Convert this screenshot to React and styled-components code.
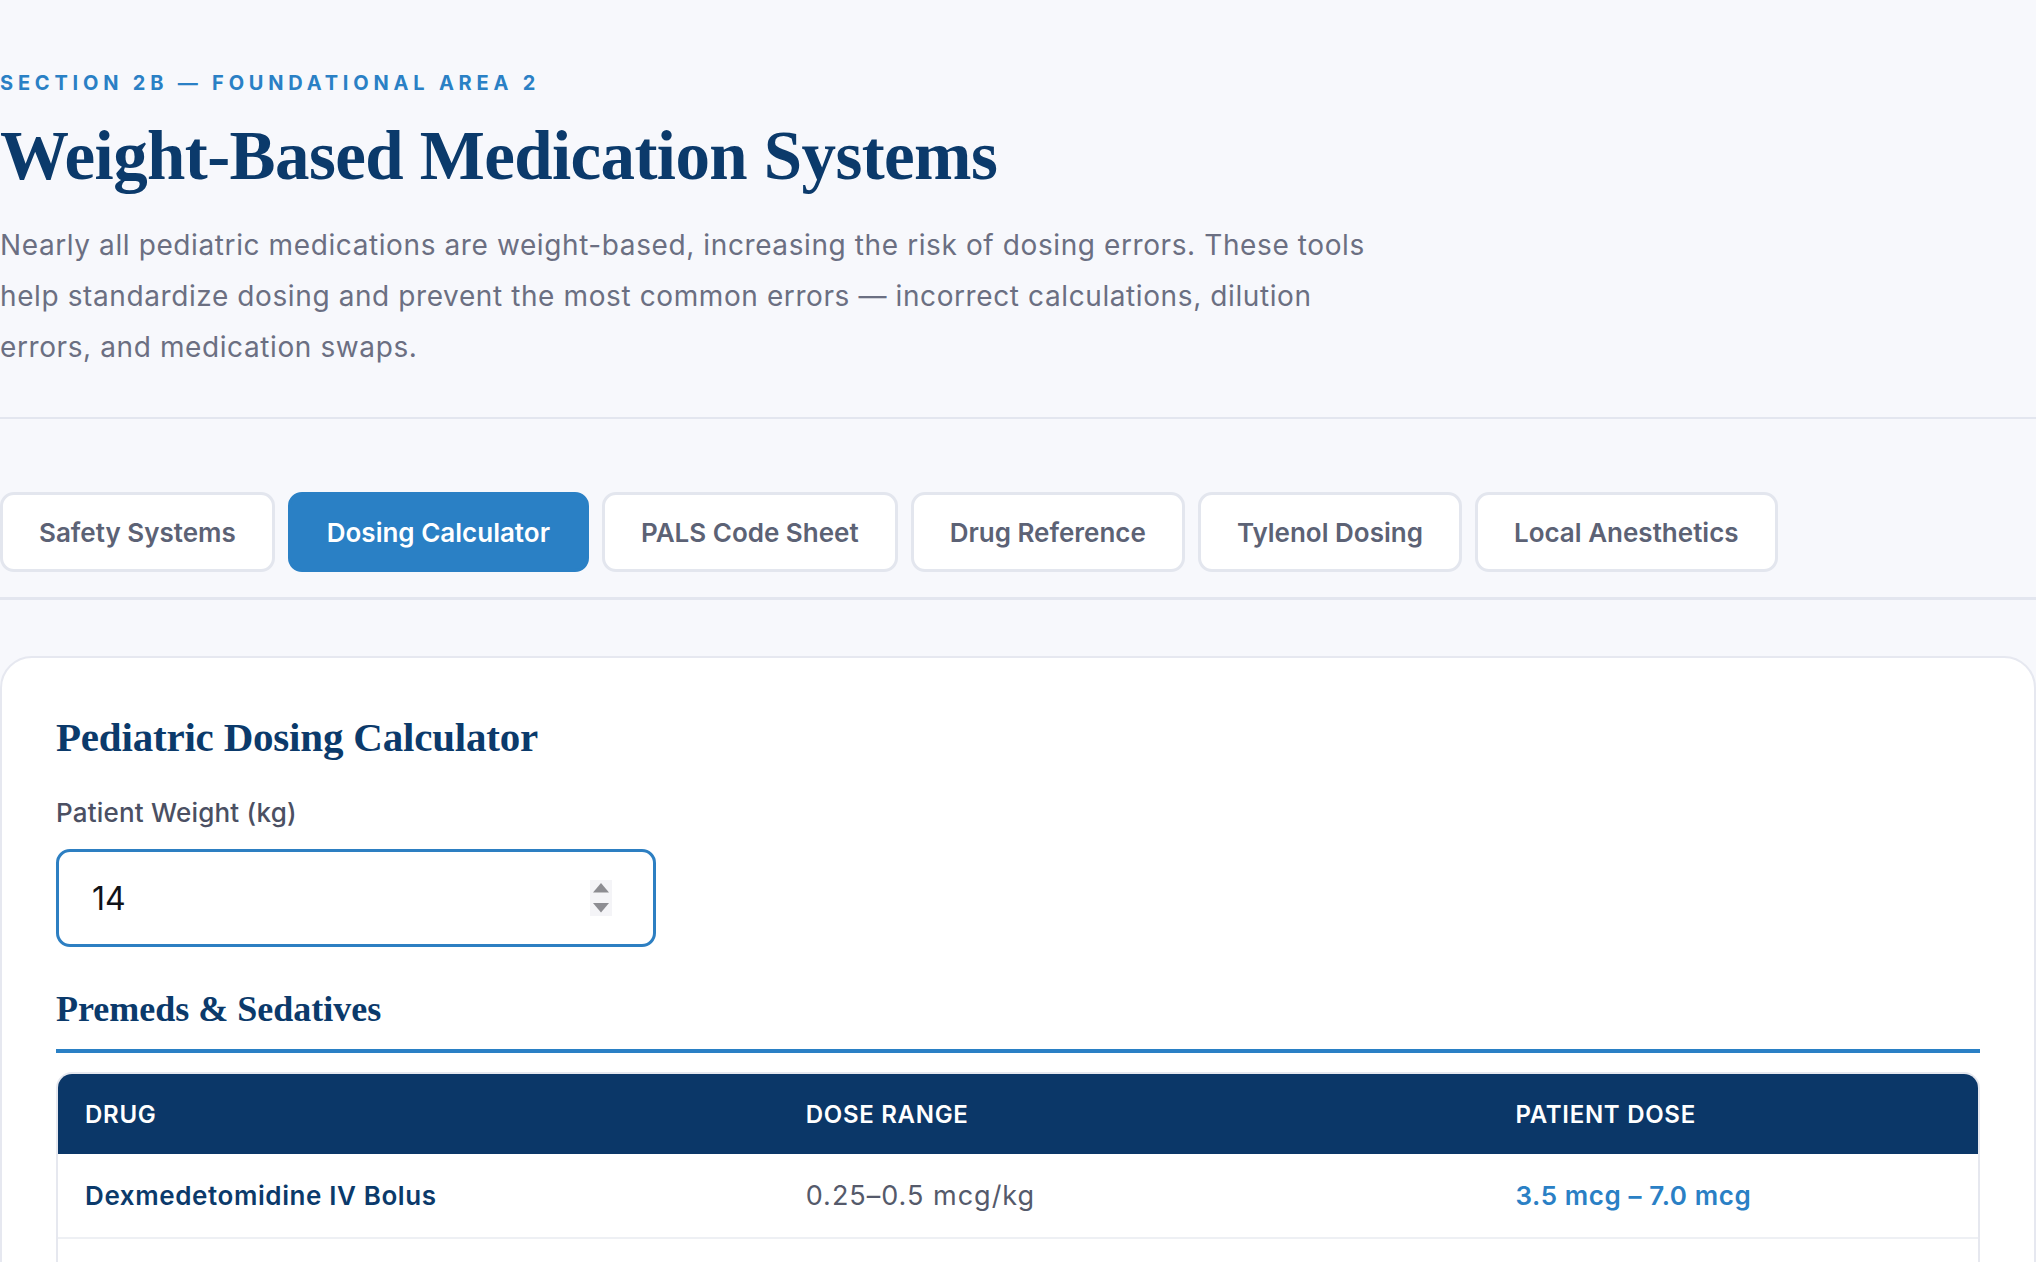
import React from "react";
import styled, { createGlobalStyle } from "styled-components";

const GlobalStyle = createGlobalStyle`
  html, body { margin: 0; padding: 0; }
  body {
    background: #f7f8fc;
    font-family: Inter, "Noto Sans", sans-serif;
    -webkit-font-smoothing: antialiased;
  }
  * { box-sizing: border-box; }
`;

const Page = styled.div`
  width: 2036px;
  min-height: 1262px;
  overflow: hidden;
`;

const Hero = styled.header`
  padding: 71px 0 44px;
  border-bottom: 2px solid #e3e6ef;
`;

const Eyebrow = styled.div`
  font-size: 20px;
  line-height: 24px;
  font-weight: 700;
  letter-spacing: 4.8px;
  color: #2a80c5;
  text-transform: uppercase;
`;

const Title = styled.h1`
  margin: 23px 0 0;
  font-family: "Liberation Serif", "DejaVu Serif", serif;
  font-weight: 700;
  font-size: 69px;
  line-height: 77px;
  letter-spacing: -0.6px;
  color: #0b3a6b;
`;

const Lead = styled.p`
  margin: 25px 0 0;
  max-width: 1400px;
  font-size: 28px;
  line-height: 51px;
  font-weight: 400;
  letter-spacing: 0.6px;
  color: #6b6f82;
`;

const TabBar = styled.nav`
  display: flex;
  gap: 13px;
  padding: 73px 0 25px;
  border-bottom: 3px solid #e3e6ef;
`;

const Tab = styled.button`
  height: 80px;
  padding: 0 36px;
  border-radius: 14px;
  border: 3px solid ${(p) => (p.$active ? "#2a80c5" : "#e3e6ee")};
  background: ${(p) => (p.$active ? "#2a80c5" : "#ffffff")};
  color: ${(p) => (p.$active ? "#ffffff" : "#5c6275")};
  font-family: Inter, "Noto Sans", sans-serif;
  font-size: 26px;
  font-weight: 600;
  cursor: pointer;
  white-space: nowrap;
`;

const Main = styled.main`
  padding-top: 56px;
`;

const Card = styled.section`
  background: #ffffff;
  border: 2px solid #e6e8f0;
  border-radius: 32px;
  padding: 55px 54px 60px;
`;

const CardTitle = styled.h2`
  margin: 0;
  font-family: "Liberation Serif", "DejaVu Serif", serif;
  font-weight: 700;
  font-size: 41px;
  line-height: 49px;
  letter-spacing: -0.2px;
  color: #0b3a6b;
`;

const Label = styled.label`
  display: block;
  margin-top: 36px;
  font-size: 26px;
  line-height: 30px;
  font-weight: 500;
  letter-spacing: 0.2px;
  color: #4b5063;
`;

const InputBox = styled.div`
  margin-top: 21px;
  width: 600px;
  height: 98px;
  display: flex;
  align-items: center;
  padding: 0 41px 0 33px;
  border: 3px solid #2d7fc2;
  border-radius: 14px;
  background: #ffffff;
`;

const NumberInput = styled.input`
  flex: 1;
  min-width: 0;
  border: none;
  outline: none;
  background: transparent;
  padding: 0;
  font-family: Inter, "Noto Sans", sans-serif;
  font-size: 32px;
  font-weight: 400;
  color: #111318;
`;

const Spinner = styled.div`
  width: 22px;
  height: 36px;
  display: flex;
  align-items: center;
  justify-content: center;
  background: #f4f4f7;
`;

const SectionTitle = styled.h3`
  margin: 41px 0 0;
  padding-bottom: 18px;
  border-bottom: 4px solid #2a80c5;
  font-family: "Liberation Serif", "DejaVu Serif", serif;
  font-weight: 700;
  font-size: 36px;
  line-height: 43px;
  color: #0b3a6b;
`;

const Table = styled.div`
  margin-top: 19px;
  min-height: 260px;
  border: 2px solid #e6e8ef;
  border-radius: 16px 16px 0 0;
  overflow: hidden;
`;

const Row = styled.div`
  display: grid;
  grid-template-columns: 720fr 709fr 489fr;
  align-items: center;
  height: ${(p) => (p.$head ? "80px" : "85px")};
  background: ${(p) => (p.$head ? "#0b3768" : "#ffffff")};
  border-bottom: ${(p) => (p.$head ? "none" : "2px solid #eef0f4")};
`;

const HeadCell = styled.div`
  padding-left: 27px;
  font-size: 24px;
  font-weight: 600;
  letter-spacing: 0.7px;
  color: #ffffff;
  text-transform: uppercase;
`;

const Cell = styled.div`
  padding-left: 27px;
  font-size: ${(p) => (p.$kind === "range" ? "27px" : "26px")};
  letter-spacing: ${(p) => (p.$kind === "range" ? "1px" : "0.6px")};
  font-weight: ${(p) => (p.$kind === "range" ? 400 : 600)};
  color: ${(p) =>
    p.$kind === "drug" ? "#0b3a6b" : p.$kind === "dose" ? "#2a80c5" : "#555a6b"};
`;

const tabs = [
  "Safety Systems",
  "Dosing Calculator",
  "PALS Code Sheet",
  "Drug Reference",
  "Tylenol Dosing",
  "Local Anesthetics",
];

const rows = [
  { drug: "Dexmedetomidine IV Bolus", range: "0.25–0.5 mcg/kg", dose: "3.5 mcg – 7.0 mcg" },
];

export default function App() {
  return (
    <Page>
      <GlobalStyle />
      <Hero>
        <Eyebrow>Section 2B — Foundational Area 2</Eyebrow>
        <Title>Weight-Based Medication Systems</Title>
        <Lead>
          Nearly all pediatric medications are weight-based, increasing the risk of dosing
          errors. These tools help standardize dosing and prevent the most common errors —
          incorrect calculations, dilution errors, and medication swaps.
        </Lead>
      </Hero>
      <TabBar>
        {tabs.map((t) => (
          <Tab key={t} $active={t === "Dosing Calculator"}>
            {t}
          </Tab>
        ))}
      </TabBar>
      <Main>
        <Card>
          <CardTitle>Pediatric Dosing Calculator</CardTitle>
          <Label htmlFor="weight">Patient Weight (kg)</Label>
          <InputBox>
            <NumberInput id="weight" type="text" defaultValue="14" />
            <Spinner>
              <svg width="16" height="30" viewBox="0 0 16 30">
                <polygon points="8,0 16,9.5 0,9.5" fill="#8d8d92" />
                <polygon points="0,20 16,20 8,29.5" fill="#8d8d92" />
              </svg>
            </Spinner>
          </InputBox>
          <SectionTitle>Premeds &amp; Sedatives</SectionTitle>
          <Table>
            <Row $head>
              <HeadCell>Drug</HeadCell>
              <HeadCell>Dose Range</HeadCell>
              <HeadCell>Patient Dose</HeadCell>
            </Row>
            {rows.map((r) => (
              <Row key={r.drug}>
                <Cell $kind="drug">{r.drug}</Cell>
                <Cell $kind="range">{r.range}</Cell>
                <Cell $kind="dose">{r.dose}</Cell>
              </Row>
            ))}
          </Table>
        </Card>
      </Main>
    </Page>
  );
}
